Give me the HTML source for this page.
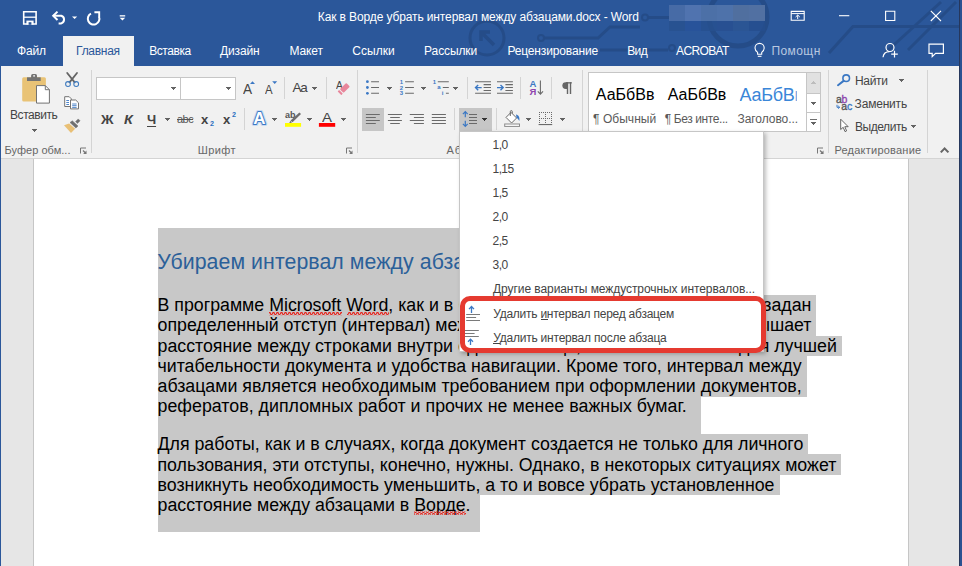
<!DOCTYPE html>
<html lang="ru"><head><meta charset="utf-8"><title>Word</title>
<style>
html,body{margin:0;padding:0}
body{width:962px;height:566px;overflow:hidden;position:relative;background:#e6e6e6;font-family:"Liberation Sans",sans-serif}
.a{position:absolute}
.t{position:absolute;white-space:nowrap;z-index:10}
.sel{position:absolute;background:#c8c8c8;z-index:1}
.vs{position:absolute;width:1px;background:#d4d4d4}
svg{position:absolute;overflow:visible}
.ar{position:absolute;width:5px;height:1px;background:#636363}.ar::before{content:'';position:absolute;left:1px;top:1px;width:3px;height:1px;background:inherit}.ar::after{content:'';position:absolute;left:2px;top:2px;width:1px;height:1px;background:inherit}.ar.up::before{top:-1px}.ar.up::after{top:-2px}
</style></head><body>
<!-- title + tabs -->
<div class="a" style="left:0;top:0;width:962px;height:66px;background:#2b579a"></div>
<svg style="left:0;top:0;z-index:0" width="962" height="66" viewBox="0 0 962 66">
<g fill="none" stroke="#244b86" stroke-width="3" opacity="0.85">
<circle cx="487" cy="38" r="17"/>
<path d="M494 45L481 32M481 41V32H490" stroke-width="3.5"/>
<path d="M544 38H598L610 27H640"/>
<circle cx="541" cy="38" r="3" stroke-width="2"/>
<path d="M648 17.5H672"/>
<circle cx="645" cy="17.5" r="3" stroke-width="2"/>
<path d="M600 50H668"/>
<circle cx="672" cy="48" r="3" stroke-width="2"/>
<circle cx="738" cy="17" r="29" stroke-width="5"/>
<path d="M829 53L853 26.5H960"/>
<path d="M885 53L941 2"/>
<path d="M908 50L956 2"/>
</g>
</svg>

<div class="a" style="left:63px;top:36px;width:71px;height:30px;background:#f1f1f1"></div>
<div class="a" style="left:669px;top:5px;width:16px;height:15.5px;background:#476ba6"></div><div class="a" style="left:685px;top:5px;width:16px;height:15.5px;background:#5073af"></div><div class="a" style="left:701px;top:5px;width:16px;height:15.5px;background:#4c70a7"></div><div class="a" style="left:717px;top:5px;width:16px;height:15.5px;background:#4e72aa"></div><div class="a" style="left:733px;top:5px;width:16px;height:15.5px;background:#506f9f"></div><div class="a" style="left:749px;top:5px;width:16px;height:15.5px;background:#5170a2"></div><div class="a" style="left:669px;top:20.5px;width:16px;height:10px;background:#28518f;opacity:.8"></div><div class="a" style="left:685px;top:20.5px;width:16px;height:10px;background:#28529a;opacity:.8"></div><div class="a" style="left:701px;top:20.5px;width:16px;height:10px;background:#27508f;opacity:.8"></div><div class="a" style="left:717px;top:20.5px;width:16px;height:10px;background:#284f90;opacity:.8"></div><div class="a" style="left:733px;top:20.5px;width:16px;height:10px;background:#2c5592;opacity:.8"></div><div class="a" style="left:749px;top:20.5px;width:16px;height:10px;background:#264e8d;opacity:.8"></div>
<!-- ribbon -->
<div class="a" style="left:0;top:66px;width:962px;height:92px;background:#f1f1f1"></div>
<div class="a" style="left:0;top:158px;width:962px;height:1px;background:#d4d4d4"></div>
<!-- page -->
<div class="a" style="left:33px;top:159px;width:876px;height:407px;background:#fff;border-left:1px solid #c6c6c6;border-right:1px solid #c6c6c6;box-sizing:border-box"></div>
<!-- window borders -->
<div class="a" style="left:0;top:0;width:1px;height:566px;background:#2b579a;z-index:30"></div>
<div class="a" style="left:959px;top:0;width:1px;height:566px;background:#26375c;z-index:30"></div>
<div class="a" style="left:960px;top:0;width:2px;height:566px;background:#2b5291;z-index:30"></div>
<svg style="left:0;top:0;z-index:8" width="962" height="66" viewBox="0 0 962 66">
<g fill="none" stroke="#fff" stroke-width="1.5">
<!-- save -->
<path d="M23.7 11.7H36.1V24H23.7Z" stroke-width="1.6"/>
<path d="M24 17.2H36" stroke-width="1.3"/>
<path d="M26.4 20.6H33.6V24.6H26.4Z" fill="#fff" stroke="none"/>
<path d="M28.6 22.2H31.4V24.8H28.6Z" fill="#2b579a" stroke="none"/>
<!-- undo -->
<path d="M53.2 15.8H61.3A4 4 0 0 1 61.3 23.4H58.6" stroke-width="2"/>
<path d="M57.5 11.6L53.2 15.8L57.5 20" stroke-width="2"/>
<!-- redo -->
<path d="M99 16.6A5.8 5.8 0 1 1 91 13.6" stroke-width="2"/>
<path d="M94.4 12.2H99.2V17" stroke-width="1.9"/>
<!-- ribbon display -->
<path d="M791.2 11.4H804.2V20.3H791.2Z" stroke-width="1.1"/>
<path d="M791.2 13.6H804.2" stroke-width="1"/>
<path d="M797.7 19V15.2M795.6 17L797.7 15L799.8 17" stroke-width="1"/>
<!-- minimize, maximize, close -->
<path d="M839 15.7H849.3" stroke-width="1.1"/>
<path d="M885.6 11.3H894.8V20.5H885.6Z" stroke-width="1.1"/>
<path d="M930.8 10.8L941 21M941 10.8L930.8 21" stroke-width="1.1"/>
<!-- bulb -->
<path d="M757.6 54.2V52.4C755.3 50.6 755 49.3 755 48A4.6 4.6 0 0 1 764.2 48C764.2 49.3 763.9 50.6 761.7 52.4V54.2Z" stroke-width="1.1"/>
<path d="M757.8 56.3H761.5" stroke-width="1.1"/>
<!-- share -->
<circle cx="890" cy="47.5" r="4" stroke-width="1.2"/>
<path d="M883 57.3C883.5 53.3 886 51.6 889.5 51.6" stroke-width="1.2"/>
<path d="M894.5 50.8V57.6M891.2 54.2H897.8" stroke-width="1.2"/>
<!-- comment -->
<path d="M929 44.1H943.4V53.3H935.6L932.2 56.6V53.3H929Z" stroke-width="1.2"/>
</g>
<g fill="#fff">
<path d="M72 16.4H77.2L74.6 19Z"/>
<path d="M119.7 15.2H125.2V16.5H119.7Z"/>
<path d="M119.7 17.8H125.2L122.45 20.6Z"/>
</g>
</svg>

<!-- group separators -->
<div class="vs" style="left:91px;top:70px;height:83px"></div>
<div class="vs" style="left:357px;top:70px;height:83px"></div>
<div class="vs" style="left:582px;top:70px;height:83px"></div>
<div class="vs" style="left:828px;top:70px;height:83px"></div>
<div class="vs" style="left:927px;top:70px;height:83px"></div>
<!-- small separators -->
<div class="vs" style="left:284px;top:77px;height:22px"></div>
<div class="vs" style="left:326px;top:77px;height:22px"></div>
<div class="vs" style="left:244px;top:108px;height:22px"></div>
<div class="vs" style="left:467px;top:77px;height:22px"></div>
<div class="vs" style="left:520px;top:77px;height:22px"></div>
<div class="vs" style="left:551px;top:77px;height:22px"></div>
<div class="vs" style="left:454px;top:108px;height:22px"></div>
<div class="vs" style="left:496px;top:108px;height:22px"></div>
<!-- combos -->
<div class="a" style="left:96px;top:77px;width:85px;height:23px;background:#fff;border:1px solid #c6c6c6;box-sizing:border-box"></div>
<div class="a" style="left:180px;top:77px;width:56px;height:23px;background:#fff;border:1px solid #c6c6c6;box-sizing:border-box"></div>
<div class="ar" style="left:171px;top:87px"></div>
<div class="ar" style="left:226px;top:87px"></div>
<!-- pressed buttons -->
<div class="a" style="left:362px;top:108px;width:22px;height:23px;background:#c6c6c6"></div>
<div class="a" style="left:459px;top:108px;width:33px;height:24px;background:#c6c6c6"></div>
<!-- styles gallery -->
<div class="a" style="left:588px;top:72px;width:233px;height:60px;background:#fff;border:1px solid #c6c6c6;box-sizing:border-box"></div>
<div class="a" style="left:806px;top:72px;width:15px;height:60px;border:1px solid #c6c6c6;box-sizing:border-box;background:#fff"></div>
<div class="a" style="left:807px;top:73px;width:13px;height:20px;background:#e1e1e1"></div>
<div class="a" style="left:806px;top:93px;width:15px;height:1px;background:#c6c6c6"></div>
<div class="a" style="left:806px;top:112px;width:15px;height:1px;background:#c6c6c6"></div>
<div class="ar up" style="left:811px;top:83px;background:#bdbdbd"></div>
<div class="ar" style="left:811px;top:102px"></div>
<div class="a" style="left:810px;top:119px;width:7px;height:1px;background:#707070"></div>
<div class="ar" style="left:811px;top:122px"></div>
<!-- dropdown arrows -->
<div class="ar" style="left:32px;top:129px"></div>
<div class="ar" style="left:165px;top:118px"></div>
<div class="ar" style="left:312px;top:87px"></div>
<div class="ar" style="left:272px;top:118px"></div>
<div class="ar" style="left:307px;top:118px"></div>
<div class="ar" style="left:341px;top:118px"></div>
<div class="ar" style="left:387px;top:87px"></div>
<div class="ar" style="left:421px;top:87px"></div>
<div class="ar" style="left:453px;top:87px"></div>
<div class="ar" style="left:482px;top:118px;background:#333"></div>
<div class="ar" style="left:526px;top:118px"></div>
<div class="ar" style="left:560px;top:118px"></div>
<div class="ar" style="left:899px;top:79px"></div>
<div class="ar" style="left:911px;top:125px"></div>
<svg style="left:0;top:0;z-index:8" width="962" height="158" viewBox="0 0 962 158">
<!-- paste -->
<rect x="22.2" y="77.3" width="23.7" height="24.3" rx="1.5" fill="#e9c376"/>
<path d="M27 77.3H40.7V81H27Z" fill="#737373"/>
<path d="M31.1 78V75.4A1.5 1.5 0 0 1 32.6 73.9H35.5A1.5 1.5 0 0 1 37 75.4V78Z" fill="#737373"/>
<rect x="33.2" y="75.2" width="1.8" height="1.4" fill="#f1f1f1"/>
<path d="M36.5 85.6H45.3L49.4 89.7V103.1H36.5Z" fill="#fff" stroke="#737373" stroke-width="1"/>
<path d="M45.3 85.6V89.7H49.4" fill="none" stroke="#737373" stroke-width="1"/>
<!-- scissors -->
<g fill="none" stroke-linecap="round">
<path d="M67.2 73L74.7 82.4M77 73L69.5 82.4" stroke="#646464" stroke-width="1.8"/>
<circle cx="68" cy="84" r="2.4" stroke="#3f7bbf" stroke-width="1.05"/>
<circle cx="76.2" cy="84" r="2.4" stroke="#3f7bbf" stroke-width="1.05"/>
</g>
<!-- copy -->
<path d="M64.7 96.7H69.2L71.3 98.8V106.5H64.7Z" fill="#fff" stroke="#737373" stroke-width="1"/>
<path d="M66.3 100.5H69M66.3 102.5H69M66.3 104.5H69" stroke="#3b78c4" stroke-width="0.9"/>
<path d="M70.5 100H75.7L78.5 102.8V108.9H70.5Z" fill="#fff" stroke="#737373" stroke-width="1"/>
<path d="M72.2 104H76.6M72.2 105.7H76.6M72.2 107.4H76.6" stroke="#3b78c4" stroke-width="0.9"/>
<!-- format painter -->
<path d="M64 125.2L69.1 123.5L75.1 128.8L71 132.9Z" fill="#e9c076"/>
<path d="M70 122.5L72.3 120.8L78 126.1L75.9 128Z" fill="#6f6f6f" stroke="#6f6f6f" stroke-width="0.5" stroke-linejoin="round"/>
<path d="M75.5 121.6L78.2 118.9L80.1 120.8L77.4 123.5Z" fill="#6f6f6f" stroke="#6f6f6f" stroke-width="0.4" stroke-linejoin="round"/>
<!-- launchers -->
<g fill="none" stroke="#777" stroke-width="1">
<path d="M86 148H80.5V153.5"/><path d="M83 150.5L86 153.5" stroke-width="1.2"/><path d="M86.5 150.6V154H83.1Z" fill="#777" stroke="none"/>
<path d="M352 148H346.5V153.5"/><path d="M349 150.5L352 153.5" stroke-width="1.2"/><path d="M352.5 150.6V154H349.1Z" fill="#777" stroke="none"/>
<path d="M823 148H817.5V153.5"/><path d="M820 150.5L823 153.5" stroke-width="1.2"/><path d="M823.5 150.6V154H820.1Z" fill="#777" stroke="none"/>
</g>
<!-- grow/shrink triangles -->
<path d="M250 84L252.5 81.2L255 84Z" fill="#3b78c4"/>
<path d="M272.2 81.2H277.2L274.7 84Z" fill="#3b78c4"/>
<!-- eraser -->
<g transform="rotate(-45 344.9 87.9)"><rect x="340.4" y="85.3" width="9" height="5.2" rx="0.9" fill="#e8869b"/><rect x="337.2" y="85.3" width="2.1" height="5.2" rx="0.5" fill="#e8869b"/></g>
<!-- text effects A -->
<text x="253.2" y="124.3" font-family="Liberation Sans, sans-serif" font-size="17" font-weight="bold" fill="#fff" stroke="#b7d0f0" stroke-width="4" stroke-linejoin="round" opacity="0.7">A</text>
<text x="253.2" y="124.3" font-family="Liberation Sans, sans-serif" font-size="17" font-weight="bold" fill="#fff" stroke="#3b78c4" stroke-width="2" stroke-linejoin="round" paint-order="stroke">A</text>
<!-- highlighter -->
<text x="285" y="118" font-family="Liberation Sans, sans-serif" font-size="9" font-weight="bold" fill="#555">ab</text>
<path d="M299.4 112.4L301 114L292.5 122.2L290.5 120.6Z" fill="#6e6e6e"/>
<path d="M290.3 121L292 122.6L289.3 123Z" fill="#555"/>
<rect x="285" y="123" width="16.1" height="3.8" fill="#ffff00"/>
<!-- font color bar -->
<rect x="318.9" y="123" width="16.3" height="3.8" fill="#ff0000"/>
<!-- bullets -->
<g fill="#3b78c4"><circle cx="367.4" cy="81.7" r="1.4"/><circle cx="367.4" cy="87.5" r="1.4"/><circle cx="367.4" cy="93.3" r="1.4"/></g>
<g stroke="#6a6a6a" stroke-width="1.1" fill="none">
<path d="M371.1 81.7H379M371.1 87.5H379M371.1 93.3H379"/>
<!-- numbering lines -->
<path d="M405.1 81.7H413.9M405.1 87.5H413.9M405.1 93.3H413.9"/>
<!-- multilevel -->
<path d="M437.8 81.7H448.8M442.8 87.5H448.8M445.9 93.3H448.8"/>
<!-- indent icons -->
<path d="M475.1 81.7H491M483.6 84.6H491M483.6 87.5H491M483.6 90.5H491M475.1 93.3H491"/>
<path d="M497 81.7H512.9M505.4 84.6H512.9M505.4 87.5H512.9M505.4 90.5H512.9M497 93.3H512.9"/>
<!-- align -->
<path d="M365.9 114.5H379.8M365.9 117.5H375.8M365.9 120.5H379.8M365.9 123.5H375.8"/>
<path d="M387.9 114.5H401.9M390.2 117.5H399.8M387.9 120.5H401.9M390.2 123.5H399.8"/>
<path d="M409.8 114.5H423.9M413.9 117.5H423.9M409.8 120.5H423.9M413.9 123.5H423.9"/>
<path d="M431.8 114.5H445.9M431.8 117.5H445.9M431.8 120.5H445.9M431.8 123.5H445.9"/>
<!-- line spacing lines -->
<path d="M469 114.5H477M469 117.5H477M469 120.5H477M469 123.5H477"/>
<!-- sort arrow -->
<path d="M540.4 80.4V94M537.8 91.4L540.4 94.2L543 91.4"/>
</g>
<!-- numbering digits -->
<g font-family="Liberation Sans, sans-serif" font-weight="bold" font-size="6" fill="#3b78c4">
<text x="399.7" y="83.8">1</text><text x="399.7" y="89.6">2</text><text x="399.7" y="95.4">3</text>
<text x="432.8" y="83.8">1</text><text x="437.2" y="89.3">a</text><text x="441.8" y="95.4">i</text>
</g>
<!-- indent arrows -->
<g stroke="#3b78c4" stroke-width="1.4" fill="none">
<path d="M481.7 87.6H475.6M478.2 84.9L475.5 87.6L478.2 90.3"/>
<path d="M497 87.6H503.1M500.5 84.9L503.2 87.6L500.5 90.3"/>
<!-- line spacing arrows -->
<path d="M465.3 111.7V117.3M462.9 114.1L465.3 111.6L467.7 114.1" stroke-width="1.2"/>
<path d="M465.3 126.3V120.7M462.9 123.9L465.3 126.4L467.7 123.9" stroke-width="1.2"/>
</g>
<!-- shading -->
<path d="M511 112.4L516.6 118L511.6 123L506 117.4Z" fill="#fff" stroke="#6a6a6a" stroke-width="1"/>
<path d="M510.3 116V111.6A1 1 0 0 1 512.3 111.6V113.5" fill="none" stroke="#6a6a6a" stroke-width="1"/>
<path d="M516 114.6C518.6 115 520 117.5 519.3 121C518.3 118.8 517.3 118.3 516.6 118Z" fill="#3b78c4"/>
<rect x="504.7" y="124" width="14.8" height="2.4" fill="#fff" stroke="#8a8a8a" stroke-width="1"/>
<!-- borders -->
<g fill="#6a6a6a"><rect x="539" y="112" width="1" height="1"/><rect x="539" y="114" width="1" height="1"/><rect x="539" y="116" width="1" height="1"/><rect x="539" y="118" width="1" height="1"/><rect x="539" y="120" width="1" height="1"/><rect x="539" y="122" width="1" height="1"/><rect x="541" y="112" width="1" height="1"/><rect x="541" y="118" width="1" height="1"/><rect x="543" y="112" width="1" height="1"/><rect x="543" y="118" width="1" height="1"/><rect x="545" y="112" width="1" height="1"/><rect x="545" y="114" width="1" height="1"/><rect x="545" y="116" width="1" height="1"/><rect x="545" y="118" width="1" height="1"/><rect x="545" y="120" width="1" height="1"/><rect x="545" y="122" width="1" height="1"/><rect x="547" y="112" width="1" height="1"/><rect x="547" y="118" width="1" height="1"/><rect x="549" y="112" width="1" height="1"/><rect x="549" y="118" width="1" height="1"/><rect x="551" y="112" width="1" height="1"/><rect x="551" y="114" width="1" height="1"/><rect x="551" y="116" width="1" height="1"/><rect x="551" y="118" width="1" height="1"/><rect x="551" y="120" width="1" height="1"/><rect x="551" y="122" width="1" height="1"/><rect x="538.6" y="124" width="13.6" height="1.1"/></g>
<!-- pilcrow -->
<g fill="#666"><path d="M567.8 82.2H565.7A3.35 3.35 0 0 0 565.7 88.9H567.8Z"/><rect x="566.8" y="82.2" width="1.4" height="11.8"/><rect x="569.8" y="82.2" width="1.4" height="11.8"/><rect x="566" y="82.2" width="5.8" height="1.3"/></g>
<!-- find -->
<circle cx="846.2" cy="78.2" r="3.3" fill="none" stroke="#3b78c4" stroke-width="1.6"/>
<path d="M843.6 80.9L838 85.2" stroke="#3b78c4" stroke-width="2" stroke-linecap="round"/>
<!-- replace -->
<g font-family="Liberation Sans, sans-serif" font-size="10.5" stroke-width="0.35">
<text x="835.9" y="102.7" fill="#555" stroke="#555">a</text><text x="841.6" y="102.7" fill="#8e44ad" stroke="#8e44ad">b</text>
<text x="841.2" y="109.8" fill="#555" stroke="#555">a</text><text x="846.9" y="109.8" fill="#3b78c4" stroke="#3b78c4">c</text>
</g>
<path d="M837 104.8V107.3H839.6M838.2 105.9L839.7 107.3L838.2 108.7" fill="none" stroke="#3b78c4" stroke-width="1"/>
<!-- cursor -->
<path d="M840.7 119.2V129.5L843.2 127.3L845 131.6L846.6 130.9L844.8 126.7H848.2Z" fill="#fff" stroke="#555" stroke-width="0.9" stroke-linejoin="round"/>
<!-- collapse -->
<path d="M940.8 152.4L944.6 148.4L948.4 152.4" fill="none" stroke="#666" stroke-width="2.1"/>
</svg>



<!-- selection -->
<div class="sel" style="left:158px;top:228px;width:450px;height:67.4px"></div>
<div class="sel" style="left:158px;top:295.3px;width:657.9px;height:41px"></div>
<div class="sel" style="left:158px;top:336px;width:684px;height:20px"></div>
<div class="sel" style="left:158px;top:355.9px;width:649px;height:40.7px"></div>
<div class="sel" style="left:158px;top:396.5px;width:542.8px;height:37.5px"></div>
<div class="sel" style="left:158px;top:434px;width:650px;height:20.3px"></div>
<div class="sel" style="left:158px;top:454.2px;width:683px;height:20.4px"></div>
<div class="sel" style="left:158px;top:474.5px;width:621.7px;height:20.4px"></div>
<div class="sel" style="left:158px;top:494.8px;width:322px;height:37.7px"></div>
<!-- squiggles -->
<svg style="left:0;top:0;z-index:3" width="962" height="566">
<defs><pattern id="sq" width="4" height="3" patternUnits="userSpaceOnUse"><path d="M0 2.6 L1 0.6 L2 0.6 L3 2.6 L4 2.6" fill="none" stroke="#e8231c" stroke-width="1.15"/></pattern></defs>
<rect x="269" y="312" width="73" height="3.2" fill="url(#sq)"/>
<rect x="347" y="312" width="42" height="3.2" fill="url(#sq)"/>
<rect x="414" y="511.5" width="52" height="3.2" fill="url(#sq)"/>
</svg>


<!-- dropdown menu -->
<div class="a" style="left:459px;top:131px;width:305px;height:221px;background:#fff;border:1px solid #c6c6c6;box-sizing:border-box;box-shadow:2px 2px 4px rgba(0,0,0,.25);z-index:5"></div>
<div class="a" style="left:460px;top:296px;width:306px;height:57px;border:5px solid #e53a30;border-radius:10px;box-sizing:border-box;background:#fff;z-index:6"></div>
<svg style="left:0;top:0;z-index:10" width="962" height="566" viewBox="0 0 962 566">
<g stroke="#7a7a7a" stroke-width="1" fill="none">
<path d="M466.2 314.5H480M466.2 317.5H476.1M466.2 320.5H480"/>
<path d="M465 330.5H478.8M465 333.5H474.6M465 336.5H478.8"/>
</g>
<g stroke="#3b78c4" stroke-width="1.3" fill="none">
<path d="M471.5 312.9V306.6M469 309.1L471.5 306.5L474 309.1"/>
<path d="M470.5 344.9V339.3M468 341.7L470.5 339.1L473 341.7"/>
</g>
</svg>
<div class="a" style="left:541.3px;top:319px;width:7px;height:1px;background:#444;z-index:10"></div>
<div class="a" style="left:493.2px;top:343px;width:6.5px;height:1px;background:#444;z-index:10"></div>

<span class="t" style="left:317.8px;top:11.15px;font-size:12px;line-height:12px;color:#fff;letter-spacing:-0.119px;">Как в Ворде убрать интервал между абзацами.docx - Word</span>
<span class="t" style="left:17.0px;top:45.15px;font-size:12px;line-height:12px;color:#fff;letter-spacing:-0.204px;">Файл</span>
<span class="t" style="left:76.1px;top:45.15px;font-size:12px;line-height:12px;color:#2b579a;letter-spacing:-0.284px;">Главная</span>
<span class="t" style="left:149.2px;top:45.15px;font-size:12px;line-height:12px;color:#fff;letter-spacing:-0.416px;">Вставка</span>
<span class="t" style="left:220.0px;top:45.15px;font-size:12px;line-height:12px;color:#fff;letter-spacing:-0.141px;">Дизайн</span>
<span class="t" style="left:289.4px;top:45.15px;font-size:12px;line-height:12px;color:#fff;letter-spacing:-0.114px;">Макет</span>
<span class="t" style="left:352.3px;top:45.15px;font-size:12px;line-height:12px;color:#fff;letter-spacing:0.025px;">Ссылки</span>
<span class="t" style="left:424.1px;top:45.15px;font-size:12px;line-height:12px;color:#fff;letter-spacing:-0.120px;">Рассылки</span>
<span class="t" style="left:507.4px;top:45.15px;font-size:12px;line-height:12px;color:#fff;letter-spacing:-0.148px;">Рецензирование</span>
<span class="t" style="left:627.2px;top:45.15px;font-size:12px;line-height:12px;color:#fff;letter-spacing:-0.573px;">Вид</span>
<span class="t" style="left:676.1px;top:45.15px;font-size:12px;line-height:12px;color:#fff;letter-spacing:-0.646px;">ACROBAT</span>
<span class="t" style="left:771.5px;top:45.15px;font-size:12px;line-height:12px;color:#b9c8e0;letter-spacing:0.411px;">Помощн</span>
<span class="t" style="left:10.0px;top:109.15px;font-size:12px;line-height:12px;color:#444;letter-spacing:-0.434px;">Вставить</span>
<span class="t" style="left:4.6px;top:144.65px;font-size:11px;line-height:11px;color:#666;letter-spacing:0.024px;">Буфер обм...</span>
<span class="t" style="left:197.8px;top:144.65px;font-size:11px;line-height:11px;color:#666;letter-spacing:0.399px;">Шрифт</span>
<span class="t" style="left:446.5px;top:144.65px;font-size:11px;line-height:11px;color:#666;letter-spacing:1.028px;z-index:4;">Абзац</span>
<span class="t" style="left:834.4px;top:144.65px;font-size:11px;line-height:11px;color:#666;letter-spacing:0.229px;">Редактирование</span>
<span class="t" style="left:854.9px;top:75.15px;font-size:12px;line-height:12px;color:#444;letter-spacing:-0.270px;">Найти</span>
<span class="t" style="left:854.6px;top:98.15px;font-size:12px;line-height:12px;color:#444;letter-spacing:-0.192px;">Заменить</span>
<span class="t" style="left:854.9px;top:121.15px;font-size:12px;line-height:12px;color:#444;letter-spacing:-0.420px;">Выделить</span>
<span class="t" style="left:100.8px;top:112.55px;font-size:13px;line-height:13px;color:#444;font-weight:bold;transform:scaleX(1.064);transform-origin:0 0;">Ж</span>
<span class="t" style="left:124.1px;top:112.55px;font-size:13px;line-height:13px;color:#444;font-weight:bold;font-style:italic;transform:scaleX(1.100);transform-origin:0 0;">К</span>
<span class="t" style="left:146.5px;top:112.55px;font-size:13px;line-height:13px;color:#444;font-weight:bold;transform:scaleX(1.006);transform-origin:0 0;border-bottom:1px solid #444;padding-bottom:0px;">Ч</span>
<span class="t" style="left:177.0px;top:114.05px;font-size:11px;line-height:11px;color:#555;letter-spacing:-0.550px;text-decoration:line-through;">abc</span>
<span class="t" style="left:201.1px;top:112.50px;font-size:13.5px;line-height:13.5px;color:#444;font-weight:bold;transform:scaleX(0.971);transform-origin:0 0;">x</span>
<span class="t" style="left:209.5px;top:120.15px;font-size:7px;line-height:7px;color:#2b6fc0;font-weight:bold;transform:scaleX(1.024);transform-origin:0 0;">2</span>
<span class="t" style="left:223.0px;top:112.50px;font-size:13.5px;line-height:13.5px;color:#444;font-weight:bold;transform:scaleX(0.971);transform-origin:0 0;">x</span>
<span class="t" style="left:231.5px;top:111.15px;font-size:7px;line-height:7px;color:#2b6fc0;font-weight:bold;transform:scaleX(1.024);transform-origin:0 0;">2</span>
<span class="t" style="left:242.5px;top:81.05px;font-size:15px;line-height:15px;color:#444;transform:scaleX(0.909);transform-origin:0 0;">A</span>
<span class="t" style="left:265.3px;top:84.15px;font-size:12px;line-height:12px;color:#444;transform:scaleX(0.948);transform-origin:0 0;">A</span>
<span class="t" style="left:292.4px;top:81.20px;font-size:13.5px;line-height:13.5px;color:#444;letter-spacing:-1.058px;">Aa</span>
<span class="t" style="left:335.6px;top:80.00px;font-size:11.5px;line-height:11.5px;color:#444;transform:scaleX(0.886);transform-origin:0 0;z-index:7;">A</span>
<span class="t" style="left:322.3px;top:111.40px;font-size:13.5px;line-height:13.5px;color:#444;transform:scaleX(1.109);transform-origin:0 0;">A</span>
<span class="t" style="left:595.8px;top:86.65px;font-size:16px;line-height:16px;color:#000;letter-spacing:0.018px;">АаБбВв</span>
<span class="t" style="left:667.7px;top:86.65px;font-size:16px;line-height:16px;color:#000;letter-spacing:0.018px;">АаБбВв</span>
<span class="t" style="left:739.6px;top:86.15px;font-size:18px;line-height:18px;color:#3a86d8;letter-spacing:-0.270px;clip-path:inset(0 7.2px 0 0);">АаБбВв</span>
<span class="t" style="left:593.0px;top:113.15px;font-size:12px;line-height:12px;color:#5a5a5a;letter-spacing:0.052px;">¶ Обычный</span>
<span class="t" style="left:664.8px;top:113.15px;font-size:12px;line-height:12px;color:#5a5a5a;letter-spacing:-0.406px;">¶ Без инте...</span>
<span class="t" style="left:737.5px;top:113.15px;font-size:12px;line-height:12px;color:#5a5a5a;letter-spacing:-0.061px;">Заголово...</span>
<span class="t" style="left:529.6px;top:78.60px;font-size:9.5px;line-height:9.5px;color:#3b78c4;font-weight:bold;">А</span>
<span class="t" style="left:529.6px;top:86.70px;font-size:9.5px;line-height:9.5px;color:#8e44ad;font-weight:bold;">Я</span>
<span class="t" style="left:492.6px;top:139.15px;font-size:12px;line-height:12px;color:#444;letter-spacing:-0.562px;">1,0</span>
<span class="t" style="left:492.6px;top:163.15px;font-size:12px;line-height:12px;color:#444;letter-spacing:-0.615px;">1,15</span>
<span class="t" style="left:492.6px;top:187.15px;font-size:12px;line-height:12px;color:#444;letter-spacing:-0.562px;">1,5</span>
<span class="t" style="left:492.6px;top:211.15px;font-size:12px;line-height:12px;color:#444;letter-spacing:-0.562px;">2,0</span>
<span class="t" style="left:492.6px;top:235.15px;font-size:12px;line-height:12px;color:#444;letter-spacing:-0.562px;">2,5</span>
<span class="t" style="left:492.6px;top:259.15px;font-size:12px;line-height:12px;color:#444;letter-spacing:-0.562px;">3,0</span>
<span class="t" style="left:493.0px;top:283.15px;font-size:12px;line-height:12px;color:#444;letter-spacing:-0.071px;">Другие варианты междустрочных интервалов...</span>
<span class="t" style="left:493.2px;top:308.15px;font-size:12px;line-height:12px;color:#444;letter-spacing:-0.245px;">Удалить интервал перед абзацем</span>
<span class="t" style="left:493.2px;top:332.15px;font-size:12px;line-height:12px;color:#444;letter-spacing:-0.215px;">Удалить интервал после абзаца</span>
<span class="t" style="left:157.5px;top:296.56px;font-size:17.77px;line-height:17.77px;color:#000;z-index:2;">В программе Microsoft Word, как и в большинстве</span>
<span class="t" style="right:150.6px;top:296.56px;font-size:17.77px;line-height:17.77px;color:#000;z-index:2;">редакторов, задан</span>
<span class="t" style="left:157.5px;top:316.56px;font-size:17.77px;line-height:17.77px;color:#000;z-index:2;">определенный отступ (интервал) между абзацами. Это</span>
<span class="t" style="right:150.5px;top:316.56px;font-size:17.77px;line-height:17.77px;color:#000;z-index:2;">превышает</span>
<span class="t" style="left:157.5px;top:337.56px;font-size:17.77px;line-height:17.77px;color:#000;z-index:2;">расстояние между строками внутри одного абзаца,</span>
<span class="t" style="right:125.2px;top:337.56px;font-size:17.77px;line-height:17.77px;color:#000;z-index:2;">для лучшей</span>
<span class="t" style="left:157.5px;top:357.56px;font-size:17.77px;line-height:17.77px;color:#000;z-index:2;">читабельности документа и удобства навигации. Кроме того, интервал между</span>
<span class="t" style="left:157.5px;top:377.56px;font-size:17.77px;line-height:17.77px;color:#000;z-index:2;">абзацами является необходимым требованием при оформлении документов,</span>
<span class="t" style="left:157.5px;top:397.56px;font-size:17.77px;line-height:17.77px;color:#000;letter-spacing:0.031px;z-index:2;">рефератов, дипломных работ и прочих не менее важных бумаг.</span>
<span class="t" style="left:157.5px;top:435.56px;font-size:17.77px;line-height:17.77px;color:#000;z-index:2;">Для работы, как и в случаях, когда документ создается не только для личного</span>
<span class="t" style="left:157.5px;top:456.56px;font-size:17.77px;line-height:17.77px;color:#000;z-index:2;">пользования, эти отступы, конечно, нужны. Однако, в некоторых ситуациях может</span>
<span class="t" style="left:157.5px;top:476.56px;font-size:17.77px;line-height:17.77px;color:#000;z-index:2;">возникнуть необходимость уменьшить, а то и вовсе убрать установленное</span>
<span class="t" style="left:157.5px;top:496.56px;font-size:17.77px;line-height:17.77px;color:#000;z-index:2;">расстояние между абзацами в Ворде.</span>
<span class="t" style="left:157.3px;top:252.00px;font-size:21.3px;line-height:21.3px;color:#2b6099;z-index:2;letter-spacing:0.07px;">Убираем интервал между абзацами в Word</span>
</body></html>
